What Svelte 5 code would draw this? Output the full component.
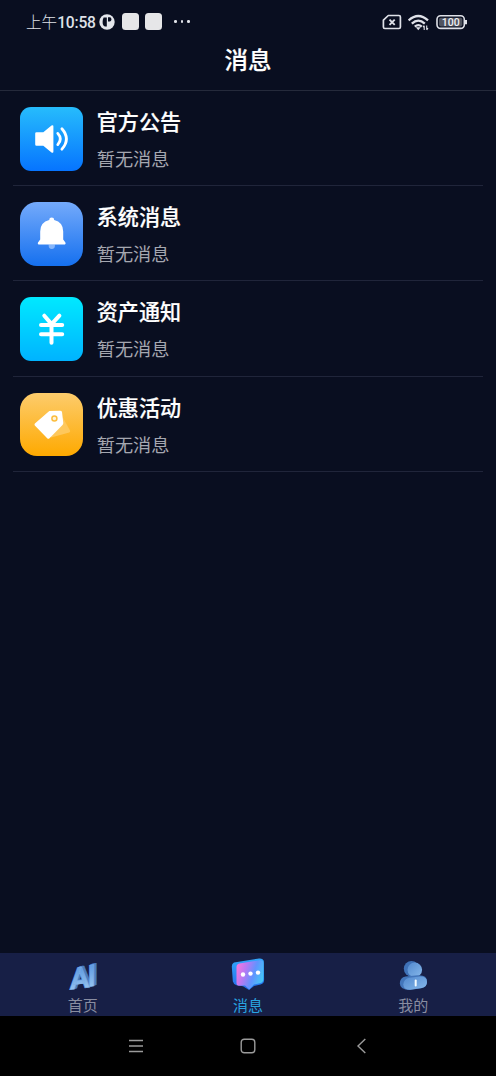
<script lang="ts">
  type Message = { icon: string; title: string; text: string };
  type Tab = { id: string; label: string };

  const messages: Message[] = [
    { icon: 'speaker', title: '官方公告', text: '暂无消息' },
    { icon: 'bell', title: '系统消息', text: '暂无消息' },
    { icon: 'yen', title: '资产通知', text: '暂无消息' },
    { icon: 'tag', title: '优惠活动', text: '暂无消息' }
  ];

  const tabs: Tab[] = [
    { id: 'home', label: '首页' },
    { id: 'messages', label: '消息' },
    { id: 'mine', label: '我的' }
  ];

  let active = $state('messages');
</script>

<div class="screen">
  <div class="status-bar">
    <div class="status-left">
      <span class="clock"><span class="period">上午</span>10:58</span>
      <svg class="app-dot" width="16" height="16" viewBox="0 0 16 16">
        <circle cx="8" cy="8" r="7.7" fill="#e4e6ec" />
        <path d="M4.6 3.6h3.2v8.9H6q-2.4-1-2.4-4.6 0-2.6 1-4.3z" fill="#090e20" />
        <path d="M9 3.3h2.2q1.2.6 1.2 2.1T11 7.6H9z" fill="#090e20" />
      </svg>
      <span class="app-square"></span>
      <span class="app-square"></span>
      <span class="dots"><i></i><i></i><i></i></span>
    </div>
    <div class="status-right">
      <svg width="20" height="16" viewBox="0 0 20 16" fill="none" stroke="#dfe1e8">
        <path d="M6.3 1.5H17q1.4 0 1.4 1.4v10.2q0 1.4-1.4 1.4H2.8q-1.4 0-1.4-1.4V6.2z" stroke-width="1.7" stroke-linejoin="round" />
        <path d="M7.5 5.6l5.2 5.2M12.7 5.6l-5.2 5.2" stroke-width="1.9" />
      </svg>
      <svg width="22" height="17" viewBox="0 0 22 17" fill="none" stroke="#dfe1e8" stroke-width="2.3">
        <path d="M.6 6.4Q10.3-2.4 20 6.4" />
        <path d="M3.8 9.7Q10.3 3.6 16.8 9.7" />
        <path d="M6.8 12.7Q10.3 9.6 13.8 12.7" />
        <path d="M7.8 13.2L10.3 16.2L12.8 13.2Z" fill="#dfe1e8" stroke="none" />
        <path d="M16.2 11.7v4.3M15 13.2l1.2-1.5M18.7 11.5v4.3M20 14.2l-1.3 1.6" stroke-width="1.1" />
      </svg>
      <svg width="32" height="15" viewBox="0 0 32 15">
        <rect x="1" y="0.8" width="27.3" height="12.6" rx="3.6" fill="none" stroke="#dfe1e8" stroke-width="1.6" />
        <rect x="3" y="2.8" width="23.3" height="8.6" rx="1.8" fill="#50545f" />
        <path d="M30 5v4.2" stroke="#dfe1e8" stroke-width="2" />
        <text class="battery" x="14.7" y="11" text-anchor="middle">100</text>
      </svg>
    </div>
  </div>

  <header class="header"><h1>消息</h1></header>

  <main class="list">
    {#each messages as m}
      <div class="row">
        <div class="row-icon {m.icon}">
          <svg width="64" height="64" viewBox="0 0 64 64">
            {#if m.icon === 'speaker'}
              <path d="M16.5 25.3h6.8L31.5 18.6q1.9-1.200 1.9.9v25q0 2.1-1.9.9l-8.200-6.600h-6.800q-1.300 0-1.300-1.300v-10.900q0-1.300 1.300-1.300z" fill="#fff" />
              <path d="M37.800 26.400q5 5.600 0 11.200M41.900 21.700q9 10.200 0 20.500" fill="none" stroke="#fff" stroke-width="2.8" stroke-linecap="round" />
            {:else if m.icon === 'bell'}
              <path d="M28.600 42.500h6.400a3.200 4.600 0 0 1-6.400 0z" fill="#86b6fb" />
              <path d="M29.200 18q0-2.400 2.500-2.400t2.500 2.400q9 2.300 9 11.400v8.200l2.200 2.800q.8 2-1.500 2H19.500q-2.300 0-1.500-2l2.200-2.800v-8.200q0-9.100 9-11.400z" fill="#fff" />
            {:else if m.icon === 'yen'}
              <path d="M24.300 18.700l7.300 8.400 7.800-8.400M21 28h21.200M21 37.200h21.200M31.500 27.500v18.200" fill="none" stroke="#fff" stroke-width="4" stroke-linecap="round" stroke-linejoin="round" />
            {:else}
              <path d="M42.900 24.500L50 37.600q.6 1.500-.8 2L31 44.500l-3-8z" fill="#fec85c" />
              <path d="M14.900 30.600L29.300 18.100l10.700-.4q1.700 0 2 1.300l1.300 11q0 1.200-.8 2L29.500 45.200q-1.200 1.100-2.300 0L14.800 32.400q-.7-1 .1-1.800z" fill="#fff" />
              <circle cx="34.400" cy="25.400" r="2.500" fill="#fff3d7" stroke="#fbbd3e" stroke-width="1.5" />
            {/if}
          </svg>
        </div>
        <div class="row-body">
          <div class="row-title">{m.title}</div>
          <div class="row-text">{m.text}</div>
        </div>
      </div>
    {/each}
  </main>

  <nav class="tabs">
    {#each tabs as tab}
      <button class="tab" class:active={active === tab.id} onclick={() => (active = tab.id)}>
        <svg width="36" height="36" viewBox="0 0 36 36">
          {#if tab.id === 'home'}
            <defs>
              <linearGradient id="ai" x1="0" y1="0" x2="0" y2="1">
                <stop offset="0.2" stop-color="#5f9be2" />
                <stop offset="0.9" stop-color="#9cc8f0" />
              </linearGradient>
            </defs>
            <g class="ai" transform="translate(4.6 32.8) skewY(-7)">
              <text x="2.4" y="-.8" fill="#4a7cc0" stroke="#4a7cc0">A</text>
              <text x="1.2" y="-.4" fill="#4a7cc0" stroke="#4a7cc0">A</text>
              <text x="0" y="0" fill="url(#ai)" stroke="#7badE5">A</text>
              <text x="20.2" y="-1.8" fill="#4a7cc0" stroke="#4a7cc0">I</text>
              <text x="19" y="-1.400" fill="#4a7cc0" stroke="#4a7cc0">I</text>
              <text x="17.6" y="-1" fill="url(#ai)" stroke="#74aae6">I</text>
            </g>
          {:else if tab.id === 'messages'}
            <defs>
              <linearGradient id="bubble" x1="0" y1="0.3" x2="1" y2="0.65">
                <stop offset="0" stop-color="#f577df" />
                <stop offset="0.3" stop-color="#b779f3" />
                <stop offset="0.62" stop-color="#6094ff" />
                <stop offset="1" stop-color="#43cbf5" />
              </linearGradient>
              <linearGradient id="bubbleSide" x1="0" y1="0" x2="0" y2="1">
                <stop offset="0" stop-color="#32a7fb" />
                <stop offset="1" stop-color="#236dec" />
              </linearGradient>
            </defs>
            <path d="M4 5.500L29 1.500q4-.4 4.800 2.500l.3 19q0 3.500-3.500 4.500L24 29l-5 4-6-3.700-6.500-1q-3-1-3.700-4L1.800 9.500q0-3 2.200-4z" fill="url(#bubbleSide)" />
            <path d="M9.500 6.500l20.300-3.300q3.700-.5 3.700 3L33.400 22q0 3.500-3.500 4.200l-6 1.300-4.600 5-4.300-4.100-6 .3q-2.500 0-2.500-3V10q0-3 3-3.500z" fill="url(#bubble)" />
            <circle cx="13" cy="17.5" r="2.2" fill="#fff" />
            <circle cx="20.5" cy="16.6" r="2.2" fill="#fff" />
            <circle cx="28" cy="15.6" r="2.2" fill="#fff" />
          {:else}
            <defs>
              <linearGradient id="person" x1="0" y1="0" x2="1" y2="1">
                <stop offset="0" stop-color="#5289cf" />
                <stop offset="1" stop-color="#86b8ea" />
              </linearGradient>
            </defs>
            <circle cx="16.5" cy="11.8" r="7.7" fill="#3f72b8" />
            <circle cx="19.8" cy="12.8" r="7.3" fill="url(#person)" />
            <path d="M10.500 19.500l12-1.300q9.500-.7 9.500 6.300 0 5.600-5.600 6.700l-12 1.800Q5.200 33 4.800 26.500q.2-6 5.700-7z" fill="#4376bb" />
            <path d="M14.500 20.700l10.500-1.200q7-.3 7 5.500 0 5-5.300 6l-11.500 1.800Q8.400 32.800 8.300 27.500q.4-5.800 6.200-6.800z" fill="url(#person)" />
            <path d="M20.700 23.500v5" stroke="#f3fbff" stroke-width="2" stroke-linecap="round" />
          {/if}
        </svg>
        <span>{tab.label}</span>
      </button>
    {/each}
  </nav>

  <div class="system-nav">
    <svg width="16" height="16" viewBox="0 0 16 16"><path d="M2 2.500h14M2 8h14M2 13.500h14" /></svg>
    <svg width="16" height="16" viewBox="0 0 16 16"><rect x="1.2" y="1.2" width="13.6" height="13.6" rx="3" /></svg>
    <svg width="16" height="16" viewBox="0 0 16 16"><path d="M12.300 1L5 8l7.300 7" /></svg>
  </div>
</div>

<style>
  :global(body) {
    background: #090e20;
  }
  .screen {
    display: flex;
    flex-direction: column;
    height: 1076px;
    background: #090e20;
    color: #fff;
    font-family: Roboto, 'Noto Sans CJK SC', sans-serif;
    overflow: hidden;
  }

  .status-bar {
    display: flex;
    flex: none;
    justify-content: space-between;
    height: 44px;
    box-sizing: border-box;
    padding: 0 28px 0 26px;
  }
  .status-left,
  .status-right {
    display: flex;
    align-items: center;
    height: 43px;
  }
  .status-right {
    gap: 6px;
    height: 44px;
  }
  .clock {
    width: 73px;
    padding-top: 2px;
    font-size: 15.6px;
    font-weight: 500;
    line-height: 20px;
    letter-spacing: -0.2px;
    color: #dfe1e8;
    white-space: nowrap;
  }
  .period {
    font-weight: 300;
    letter-spacing: 0;
  }
  .app-dot {
    margin-right: 7px;
  }
  .app-square {
    width: 16.5px;
    height: 16.5px;
    margin-right: 6.5px;
    border-radius: 3.5px;
    background: #e6e6e8;
  }
  .dots {
    display: flex;
    gap: 4px;
    margin-left: 6px;
  }
  .dots i {
    width: 2.5px;
    height: 2.5px;
    border-radius: 50%;
    background: #dfe1e8;
  }
  .battery {
    font-size: 10.5px;
    font-weight: 500;
    fill: #f0f1f5;
  }

  .header {
    display: flex;
    flex: none;
    justify-content: center;
    height: 47px;
    box-sizing: border-box;
    border-bottom: 1px solid #252a3b;
  }
  h1 {
    margin: 0;
    font-size: 23.5px;
    font-weight: 500;
    line-height: 34px;
    -webkit-text-stroke: 0.2px #fff;
  }

  .list {
    flex: 1;
    padding: 0 13px;
  }
  .row {
    display: flex;
    height: 95.2px;
    box-sizing: border-box;
    padding: 16px 0 0 6.7px;
    border-bottom: 1px solid #20253a;
  }
  .row-icon {
    width: 63.5px;
    height: 63.5px;
  }
  .row-icon svg {
    display: block;
  }
  .speaker,
  .yen {
    border-radius: 11px;
  }
  .bell,
  .tag {
    border-radius: 17px;
  }
  .speaker {
    background: linear-gradient(#26bcfc, #0674ff);
  }
  .bell {
    background: linear-gradient(#74aafb, #1570ef);
  }
  .yen {
    background: linear-gradient(#00e9ff, #00b3ff);
  }
  .tag {
    background: linear-gradient(#fdcc6c, #fea900);
  }
  .row-body {
    margin-left: 13.5px;
  }
  .row-title {
    padding-top: 1px;
    font-size: 21.1px;
    font-weight: 500;
    line-height: 30px;
    -webkit-text-stroke: 0.2px #fff;
  }
  .row-text {
    margin-top: 8px;
    font-size: 18.2px;
    line-height: 28px;
    color: #a5a7b0;
  }

  .tabs {
    display: grid;
    flex: none;
    grid-template-columns: repeat(3, 1fr);
    height: 63.5px;
    background: #171f46;
  }
  .tab {
    display: flex;
    flex-direction: column;
    align-items: center;
    padding: 4px 0 0;
    border: 0;
    background: none;
    color: #898da1;
    font: inherit;
    font-size: 15px;
    line-height: 20px;
  }
  .tab svg {
    overflow: visible;
  }
  .tab span {
    margin-top: 3px;
  }
  .tab.active {
    color: #29a4e0;
  }
  .ai {
    font-size: 30px;
    font-weight: 700;
    stroke-width: 0.5;
  }

  .system-nav {
    display: grid;
    flex: none;
    grid-template-columns: repeat(3, 113px);
    justify-content: center;
    justify-items: center;
    align-items: center;
    height: 60px;
    background: #000;
  }
  .system-nav svg {
    fill: none;
    stroke: #9b9b9b;
    stroke-width: 1.4;
  }
</style>
